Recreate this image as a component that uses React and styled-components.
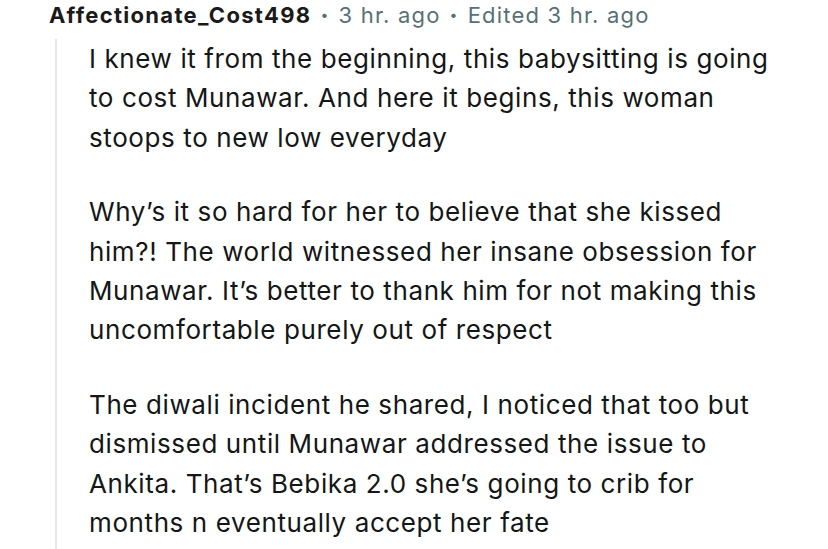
import styled, { createGlobalStyle } from "styled-components";

const GlobalStyle = createGlobalStyle`
    html, body {
        margin: 0;
        padding: 0;
        background: #ffffff;
    }
    body {
        font-family: Inter, "Noto Sans", "Liberation Sans", sans-serif;
        -webkit-font-smoothing: antialiased;
    }
`;

const Comment = styled.article`
    width: 828px;
    height: 549px;
    overflow: hidden;
    box-sizing: border-box;
    padding: 1px 0 0 49px;
    display: flex;
    flex-direction: column;
`;

const Meta = styled.div`
    display: flex;
    align-items: baseline;
    gap: 9px;
    font-size: 22px;
    line-height: 28px;
    letter-spacing: 1.2px;
    color: #576f76;
`;

const Author = styled.span`
    font-weight: 700;
    color: #1a1a1b;
    letter-spacing: 1.3px;
`;

const Dot = styled.span`
    font-size: 14px;
    position: relative;
    top: -3px;
`;

const Thread = styled.div`
    margin-top: 7px;
    margin-left: 6px;
    border-left: 2px solid #e6e6e6;
    padding-left: 32px;
    flex: 1;
`;

const Paragraph = styled.p`
    margin: 0 0 35px;
    max-width: 700px;
    font-size: 26px;
    line-height: 39.4px;
    letter-spacing: 0.6px;
    color: #141617;
`;

const paragraphs = [
    "I knew it from the beginning, this babysitting is going to cost Munawar. And here it begins, this woman stoops to new low everyday",
    "Why\u2019s it so hard for her to believe that she kissed him?! The world witnessed her insane obsession for Munawar. It\u2019s better to thank him for not making this uncomfortable purely out of respect",
    "The diwali incident he shared, I noticed that too but dismissed until Munawar addressed the issue to Ankita. That\u2019s Bebika 2.0 she\u2019s going to crib for months n eventually accept her fate",
];

const App = () => {
    return (
        <>
            <GlobalStyle />
            <Comment>
                <Meta>
                    <Author>Affectionate_Cost498</Author>
                    <Dot>•</Dot>
                    <span>3 hr. ago</span>
                    <Dot>•</Dot>
                    <span>Edited 3 hr. ago</span>
                </Meta>
                <Thread>
                    {paragraphs.map((text, i) => (
                        <Paragraph key={i}>{text}</Paragraph>
                    ))}
                </Thread>
            </Comment>
        </>
    );
};

export default App;
